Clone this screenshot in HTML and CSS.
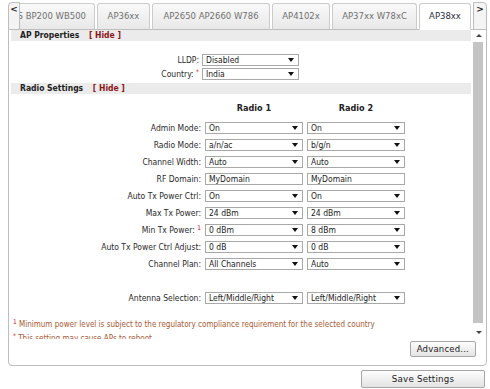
FILE: index.html
```html
<!DOCTYPE html>
<html lang="en">
<head>
  <meta charset="UTF-8" />
  <title>AP Settings</title>
  <link rel="stylesheet" href="styles.css">
</head>
<body>
  <div class="page">
    <div class="panel">
      <div class="tabbar">
        <div class="tab-arrow left">&lt;</div>
        <div class="tabs">
          <div class="tab tab-bp">W68xS BP200 WB500</div>
          <div class="tab tab-36">AP36xx</div>
          <div class="tab tab-26">AP2650 AP2660 W786</div>
          <div class="tab tab-41">AP4102x</div>
          <div class="tab tab-37">AP37xx W78xC</div>
          <div class="tab tab-38 active">AP38xx</div>
        </div>
        <div class="tab-arrow right">&gt;</div>
      </div>

      <div class="box">
        <div class="scroll">
          <div class="content">
            <div class="band">AP Properties <span class="hide">[ Hide ]</span></div>
            <div class="form-ap">
              <div class="label">LLDP:</div>
              <div class="field drop"><select><option>Disabled</option></select></div>
              <div class="label">Country: <sup>*</sup></div>
              <div class="field drop"><select><option>India</option></select></div>
            </div>

            <div class="band band-radio">Radio Settings <span class="hide">[ Hide ]</span></div>
            <div class="form-radio">
              <div></div>
              <div class="head">Radio 1</div>
              <div class="head">Radio 2</div>

              <div class="label">Admin Mode:</div>
              <div class="field drop"><select><option>On</option></select></div>
              <div class="field drop"><select><option>On</option></select></div>

              <div class="label">Radio Mode:</div>
              <div class="field drop"><select><option>a/n/ac</option></select></div>
              <div class="field drop"><select><option>b/g/n</option></select></div>

              <div class="label">Channel Width:</div>
              <div class="field drop"><select><option>Auto</option></select></div>
              <div class="field drop"><select><option>Auto</option></select></div>

              <div class="label">RF Domain:</div>
              <div class="field"><input type="text" value="MyDomain"></div>
              <div class="field"><input type="text" value="MyDomain"></div>

              <div class="label">Auto Tx Power Ctrl:</div>
              <div class="field drop"><select><option>On</option></select></div>
              <div class="field drop"><select><option>On</option></select></div>

              <div class="label">Max Tx Power:</div>
              <div class="field drop"><select><option>24 dBm</option></select></div>
              <div class="field drop"><select><option>24 dBm</option></select></div>

              <div class="label">Min Tx Power: <sup>1</sup></div>
              <div class="field drop"><select><option>0 dBm</option></select></div>
              <div class="field drop"><select><option>8 dBm</option></select></div>

              <div class="label">Auto Tx Power Ctrl Adjust:</div>
              <div class="field drop"><select><option>0 dB</option></select></div>
              <div class="field drop"><select><option>0 dB</option></select></div>

              <div class="label">Channel Plan:</div>
              <div class="field drop"><select><option>All Channels</option></select></div>
              <div class="field drop"><select><option>Auto</option></select></div>

              <div class="spacer"></div>

              <div class="label">Antenna Selection:</div>
              <div class="field drop"><select><option>Left/Middle/Right</option></select></div>
              <div class="field drop"><select><option>Left/Middle/Right</option></select></div>
            </div>

            <div class="notes">
              <div><sup>1</sup> Minimum power level is subject to the regulatory compliance requirement for the selected country</div>
              <div><sup>*</sup> This setting may cause APs to reboot</div>
            </div>
          </div>

          <div class="scrollbar">
            <div class="sb-btn up"></div>
            <div class="sb-track"><div class="sb-thumb"></div></div>
            <div class="sb-btn down"></div>
          </div>
        </div>

        <div class="box-foot">
          <button class="btn">Advanced...</button>
        </div>
      </div>
    </div>

    <div class="actions">
      <button class="btn save">Save Settings</button>
    </div>
  </div>
</body>
</html>
```

FILE: styles.css
```css
* {
  box-sizing: border-box;
}

body {
  margin: 0;
  background-color: #fff;
  color: #2a2a2a;
  font-family: "DejaVu Sans Condensed", "DejaVu Sans", sans-serif;
  font-size: 8.5px;
}

.page {
  width: 487px;
  padding: 2px 0 0 8px;
}

/* tab strip */
.tabbar {
  display: flex;
  height: 28px;
  margin-bottom: -1px;
  position: relative;
  z-index: 1;
}

.tab-arrow {
  flex: none;
  width: 12px;
  border: 1px solid #bdbdbd;
  background-color: #f4f4f4;
  color: #222;
  font-family: "DejaVu Sans", sans-serif;
  font-weight: bold;
  font-size: 9px;
  line-height: 12px;
  text-align: center;
}

.tab-arrow.left {
  border-radius: 4px 0 0 0;
}

.tab-arrow.right {
  width: 14px;
  margin-left: 2px;
  border-radius: 0 4px 0 0;
}

.tabs {
  flex: 1;
  min-width: 0;
  display: flex;
  justify-content: flex-end;
  align-items: flex-end;
  gap: 2px;
  overflow: hidden;
}

.tab {
  flex: none;
  height: 27px;
  border: 1px solid #cbcbcb;
  border-bottom-color: #bdbdbd;
  border-radius: 3px 3px 0 0;
  background: linear-gradient(#f9f9f9, #e8e8e8);
  color: #707070;
  font-family: "DejaVu Sans", sans-serif;
  font-size: 8.5px;
  line-height: 25px;
  text-align: center;
  white-space: nowrap;
}

.tab-bp { width: 120px; text-align: right; padding-right: 8px; }
.tab-36 { width: 53px; }
.tab-26 { width: 118px; }
.tab-41 { width: 58px; }
.tab-37 { width: 85px; }
.tab-38 { width: 52px; }

.tab.active {
  background: #fff;
  color: #2b2b45;
  border-bottom-color: #fff;
}

/* content box */
.box {
  height: 337px;
  border: 1px solid #bdbdbd;
  border-radius: 0 0 4px 4px;
  display: flex;
  flex-direction: column;
}

.scroll {
  display: flex;
  height: 309px;
}

.content {
  flex: 1;
  overflow: hidden;
  padding: 0 1px 0 2px;
}

.band {
  height: 11px;
  padding-left: 9px;
  background-color: #ebebeb;
  color: #222;
  font-weight: bold;
  line-height: 11px;
  white-space: nowrap;
}

.band .hide {
  color: #8b1515;
  margin-left: 7px;
}

.band-radio {
  margin-top: 3px;
}

.label {
  text-align: right;
  line-height: 12px;
  white-space: nowrap;
}

.label sup,
.notes sup {
  color: #d01010;
  font-size: 6.5px;
  line-height: 0;
  vertical-align: 3px;
}

.form-ap {
  display: grid;
  grid-template-columns: 188px 97px;
  grid-auto-rows: 12px;
  column-gap: 3px;
  row-gap: 2px;
  margin-top: 13px;
}

.form-radio {
  display: grid;
  grid-template-columns: 190px 98px 98px;
  grid-template-rows: 17px;
  grid-auto-rows: 12px;
  column-gap: 4px;
  row-gap: 5px;
  margin-top: 6px;
}

.spacer {
  grid-column: 1 / -1;
}

.head {
  text-align: center;
  font-weight: bold;
  font-size: 9px;
  line-height: 17px;
  color: #222;
}

.field {
  position: relative;
  height: 12px;
}

.field select,
.field input {
  display: block;
  width: 100%;
  height: 12px;
  margin: 0;
  padding: 0 3px;
  border: 1px solid #a8a8a8;
  border-radius: 0;
  background-color: #fff;
  color: #222;
  font-family: inherit;
  font-size: 8.5px;
  line-height: 10px;
  outline: none;
  -webkit-appearance: none;
  appearance: none;
}

.field.drop::after {
  content: "";
  position: absolute;
  right: 5px;
  top: 4px;
  border-left: 3px solid transparent;
  border-right: 3px solid transparent;
  border-top: 4px solid #111;
}

.notes {
  margin-top: 14px;
  padding-left: 2px;
  color: #a85a34;
  font-size: 8px;
  line-height: 14px;
  white-space: nowrap;
}

/* fake scrollbar */
.scrollbar {
  flex: none;
  width: 14px;
  display: flex;
  flex-direction: column;
  background-color: #fff;
}

.sb-btn {
  height: 12px;
  position: relative;
}

.sb-btn::after {
  content: "";
  position: absolute;
  left: 4px;
  top: 4px;
  border-left: 3px solid transparent;
  border-right: 3px solid transparent;
}

.sb-btn.up::after {
  border-bottom: 3px solid #444;
}

.sb-btn.down::after {
  border-top: 3px solid #444;
}

.sb-track {
  flex: 1;
  padding: 0 3px 0 1px;
}

.sb-thumb {
  height: 281px;
  background-color: #c4c4c4;
}

.box-foot {
  flex: 1;
  display: flex;
  justify-content: flex-end;
  align-items: flex-start;
  padding: 2px 10px 0 0;
}

.btn {
  height: 16px;
  padding: 0 6px;
  border: 1px solid #a6a6a6;
  border-radius: 2px;
  background: linear-gradient(#fdfdfd, #e3e3e3);
  color: #222;
  font-family: "DejaVu Sans", sans-serif;
  font-size: 8.5px;
  letter-spacing: 0.2px;
  line-height: 14px;
}

.actions {
  display: flex;
  justify-content: flex-end;
  padding-right: 2px;
  margin-top: 4px;
}

.btn.save {
  width: 124px;
  height: 18px;
  font-size: 8.7px;
}
```
